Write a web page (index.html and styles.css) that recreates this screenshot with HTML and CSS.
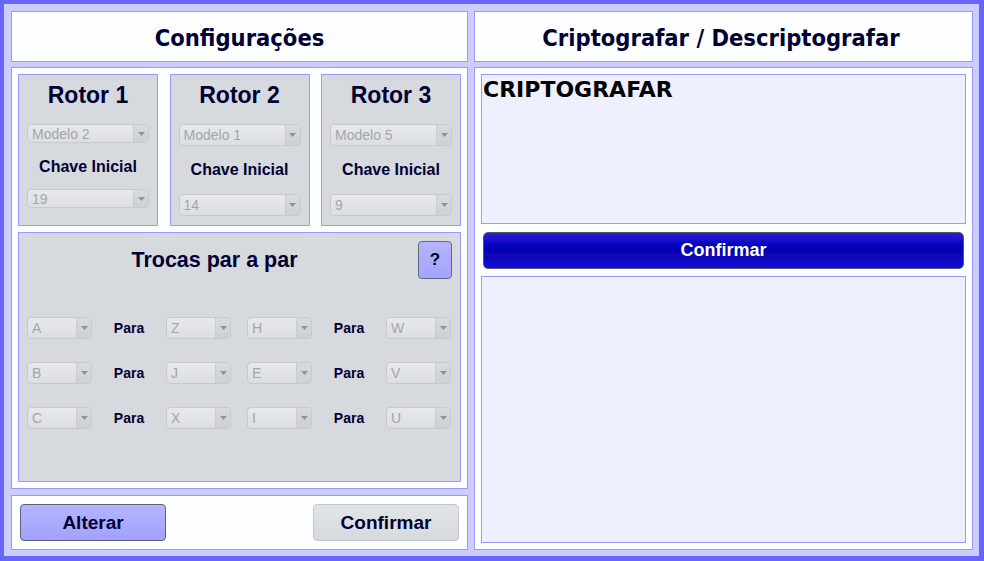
FILE: index.html
```html
<!DOCTYPE html>
<html lang="pt">
<head>
<meta charset="utf-8">
<title>Enigma</title>
<link rel="stylesheet" href="styles.css">
</head>
<body>
<div class="frame">
  <div class="col col-left">
    <header class="panel head"><h1>Configurações</h1></header>
    <section class="panel config">
      <div class="rotors">
        <div class="rotor rotor-compact">
          <h2>Rotor 1</h2>
          <div class="combo"><span class="val">Modelo 2</span><span class="arrow"><svg width="7" height="4" viewBox="0 0 7 4"><path d="M0 0h7L3.5 4z"/></svg></span></div>
          <div class="chave">Chave Inicial</div>
          <div class="combo"><span class="val">19</span><span class="arrow"><svg width="7" height="4" viewBox="0 0 7 4"><path d="M0 0h7L3.5 4z"/></svg></span></div>
        </div>
        <div class="rotor">
          <h2>Rotor 2</h2>
          <div class="combo"><span class="val">Modelo 1</span><span class="arrow"><svg width="7" height="4" viewBox="0 0 7 4"><path d="M0 0h7L3.5 4z"/></svg></span></div>
          <div class="chave">Chave Inicial</div>
          <div class="combo"><span class="val">14</span><span class="arrow"><svg width="7" height="4" viewBox="0 0 7 4"><path d="M0 0h7L3.5 4z"/></svg></span></div>
        </div>
        <div class="rotor">
          <h2>Rotor 3</h2>
          <div class="combo"><span class="val">Modelo 5</span><span class="arrow"><svg width="7" height="4" viewBox="0 0 7 4"><path d="M0 0h7L3.5 4z"/></svg></span></div>
          <div class="chave">Chave Inicial</div>
          <div class="combo"><span class="val">9</span><span class="arrow"><svg width="7" height="4" viewBox="0 0 7 4"><path d="M0 0h7L3.5 4z"/></svg></span></div>
        </div>
      </div>
      <div class="swaps">
        <div class="swaps-head">
          <h2>Trocas par a par</h2>
          <button class="help">?</button>
        </div>
        <div class="swap-rows">
          <div class="swap-row">
            <div class="pair">
              <div class="combo"><span class="val">A</span><span class="arrow"><svg width="7" height="4" viewBox="0 0 7 4"><path d="M0 0h7L3.5 4z"/></svg></span></div>
              <span class="para">Para</span>
              <div class="combo"><span class="val">Z</span><span class="arrow"><svg width="7" height="4" viewBox="0 0 7 4"><path d="M0 0h7L3.5 4z"/></svg></span></div>
            </div>
            <div class="pair">
              <div class="combo"><span class="val">H</span><span class="arrow"><svg width="7" height="4" viewBox="0 0 7 4"><path d="M0 0h7L3.5 4z"/></svg></span></div>
              <span class="para">Para</span>
              <div class="combo"><span class="val">W</span><span class="arrow"><svg width="7" height="4" viewBox="0 0 7 4"><path d="M0 0h7L3.5 4z"/></svg></span></div>
            </div>
          </div>
          <div class="swap-row">
            <div class="pair">
              <div class="combo"><span class="val">B</span><span class="arrow"><svg width="7" height="4" viewBox="0 0 7 4"><path d="M0 0h7L3.5 4z"/></svg></span></div>
              <span class="para">Para</span>
              <div class="combo"><span class="val">J</span><span class="arrow"><svg width="7" height="4" viewBox="0 0 7 4"><path d="M0 0h7L3.5 4z"/></svg></span></div>
            </div>
            <div class="pair">
              <div class="combo"><span class="val">E</span><span class="arrow"><svg width="7" height="4" viewBox="0 0 7 4"><path d="M0 0h7L3.5 4z"/></svg></span></div>
              <span class="para">Para</span>
              <div class="combo"><span class="val">V</span><span class="arrow"><svg width="7" height="4" viewBox="0 0 7 4"><path d="M0 0h7L3.5 4z"/></svg></span></div>
            </div>
          </div>
          <div class="swap-row">
            <div class="pair">
              <div class="combo"><span class="val">C</span><span class="arrow"><svg width="7" height="4" viewBox="0 0 7 4"><path d="M0 0h7L3.5 4z"/></svg></span></div>
              <span class="para">Para</span>
              <div class="combo"><span class="val">X</span><span class="arrow"><svg width="7" height="4" viewBox="0 0 7 4"><path d="M0 0h7L3.5 4z"/></svg></span></div>
            </div>
            <div class="pair">
              <div class="combo"><span class="val">I</span><span class="arrow"><svg width="7" height="4" viewBox="0 0 7 4"><path d="M0 0h7L3.5 4z"/></svg></span></div>
              <span class="para">Para</span>
              <div class="combo"><span class="val">U</span><span class="arrow"><svg width="7" height="4" viewBox="0 0 7 4"><path d="M0 0h7L3.5 4z"/></svg></span></div>
            </div>
          </div>
        </div>
      </div>
    </section>
    <section class="panel actions">
      <button class="btn btn-alterar">Alterar</button>
      <button class="btn btn-confirm">Confirmar</button>
    </section>
  </div>
  <div class="col col-right">
    <header class="panel head"><h1>Criptografar / Descriptografar</h1></header>
    <section class="panel crypt">
      <div class="textbox textbox-in">CRIPTOGRAFAR</div>
      <button class="btn-blue">Confirmar</button>
      <div class="textbox textbox-out"></div>
    </section>
  </div>
</div>
</body>
</html>
```
FILE: styles.css
```css
* { box-sizing: border-box; }
html, body { margin: 0; padding: 0; }
body {
  width: 984px;
  height: 561px;
  overflow: hidden;
  font-family: "Liberation Sans", Arial, sans-serif;
  color: #000033;
}
.frame {
  display: flex;
  gap: 6px;
  width: 984px;
  height: 561px;
  border-style: solid;
  border-color: #6666ff;
  border-width: 4px 5px 5px 4px;
  background: #ccccff;
  padding: 7px 6px 6px 7px;
}
.col {
  display: flex;
  flex-direction: column;
}
.col-left { width: 457px; }
.col-right { width: 499px; }
.panel {
  background: #fdfeff;
  border: 1px solid #9999ff;
}
.head {
  height: 51px;
  display: flex;
  align-items: center;
  justify-content: center;
  margin-bottom: 5px;
}
.head h1 {
  margin: 0;
  font-family: "DejaVu Sans Condensed", "DejaVu Sans", sans-serif;
  font-stretch: condensed;
  font-weight: bold;
  font-size: 23.5px;
  color: #000033;
  padding-top: 2px;
}
.col-right .head h1 { margin-right: 5px; }
.config {
  height: 422px;
  padding: 6px;
  display: flex;
  flex-direction: column;
  gap: 6px;
}
.rotors {
  display: flex;
  justify-content: space-between;
}
.rotor {
  width: 140px;
  height: 152px;
  background: #d6d9dd;
  border: 1px solid #9999ff;
  padding: 7px 8px 0;
  display: flex;
  flex-direction: column;
}
.rotor h2 {
  margin: 0;
  text-align: center;
  font-size: 23px;
  line-height: 26px;
  font-weight: bold;
  color: #000033;
}
.rotor > .combo { margin-top: 16px; }
.chave {
  margin: 14px 0 14px;
  text-align: center;
  font-weight: bold;
  font-size: 16px;
  line-height: 20px;
}
.rotor > .chave + .combo { margin-top: 0; }
.rotor-compact .combo { height: 19px; }
.rotor-compact .chave { margin: 14px 0 13px; line-height: 19px; }
.combo {
  display: flex;
  height: 22px;
  border: 1px solid #c6cace;
  border-radius: 4px;
  background: linear-gradient(#e7e9ec, #dcdfe2);
  color: #a2a6ab;
  font-size: 14px;
  overflow: hidden;
}
.combo .val {
  flex: 1;
  padding-left: 4px;
  display: flex;
  align-items: center;
}
.combo .arrow {
  width: 15px;
  border-left: 1px solid #c9cdd1;
  background: linear-gradient(#d7dade, #cdd1d5);
  display: flex;
  align-items: center;
  justify-content: center;
}
.combo .arrow svg { fill: #8e9399; display: block; }
.swaps {
  height: 250px;
  background: #d6d9dd;
  border: 1px solid #9999ff;
  padding: 8px 8px 0 0;
}
.swaps-head {
  display: flex;
  align-items: center;
}
.swaps-head h2 {
  flex: 1;
  margin: 0;
  text-align: center;
  font-size: 21.5px;
  font-weight: bold;
  color: #000033;
}
.help {
  width: 34px;
  height: 38px;
  margin: 0 0 0 8px;
  padding: 0;
  border: 1px solid #66687e;
  border-radius: 4px;
  background: linear-gradient(#b4b4ff, #a4a4ff);
  font-family: "Liberation Sans", Arial, sans-serif;
  font-weight: bold;
  font-size: 17px;
  color: #000011;
}
.swap-rows {
  margin-top: 38px;
  padding-left: 8px;
  display: flex;
  flex-direction: column;
  gap: 23px;
}
.swap-row {
  display: flex;
  gap: 16px;
}
.pair {
  display: grid;
  grid-template-columns: 65px 74px 65px;
  align-items: center;
}
.para {
  text-align: center;
  font-weight: bold;
  font-size: 14px;
  color: #000033;
}
.actions {
  height: 55px;
  margin-top: 6px;
  padding: 8px;
  display: flex;
  justify-content: space-between;
}
.btn {
  width: 146px;
  height: 37px;
  border-radius: 4px;
  font-family: "Liberation Sans", Arial, sans-serif;
  font-weight: bold;
  font-size: 19px;
  color: #000033;
  padding: 0;
}
.btn-alterar {
  border: 1px solid #5e6076;
  background: linear-gradient(#b4b4ff, #a2a2ff);
}
.btn-confirm {
  border: 1px solid #c3c7cc;
  background: linear-gradient(#e2e5e8, #d6d9dd);
}
.crypt {
  flex: 1;
  padding: 6px;
  display: flex;
  flex-direction: column;
}
.textbox {
  background: #eef0ff;
  border: 1px solid #9999ff;
}
.textbox-in {
  height: 150px;
  padding: 2px 1px;
  font-family: "DejaVu Sans", sans-serif;
  font-weight: bold;
  font-size: 22px;
  color: #000000;
}
.btn-blue {
  height: 37px;
  margin: 8px 2px 7px;
  padding: 0;
  border: 1px solid #555566;
  border-radius: 5px;
  background: linear-gradient(to bottom, #2a1ed6 0%, #1c12cc 18%, #0804c0 30%, #0000b8 45%, #0000b6 55%, #1a02b0 62%, #0808c4 75%, #1010d6 100%);
  color: #ffffff;
  font-family: "Liberation Sans", Arial, sans-serif;
  font-weight: bold;
  font-size: 18px;
}
.textbox-out { flex: 1; }
```
